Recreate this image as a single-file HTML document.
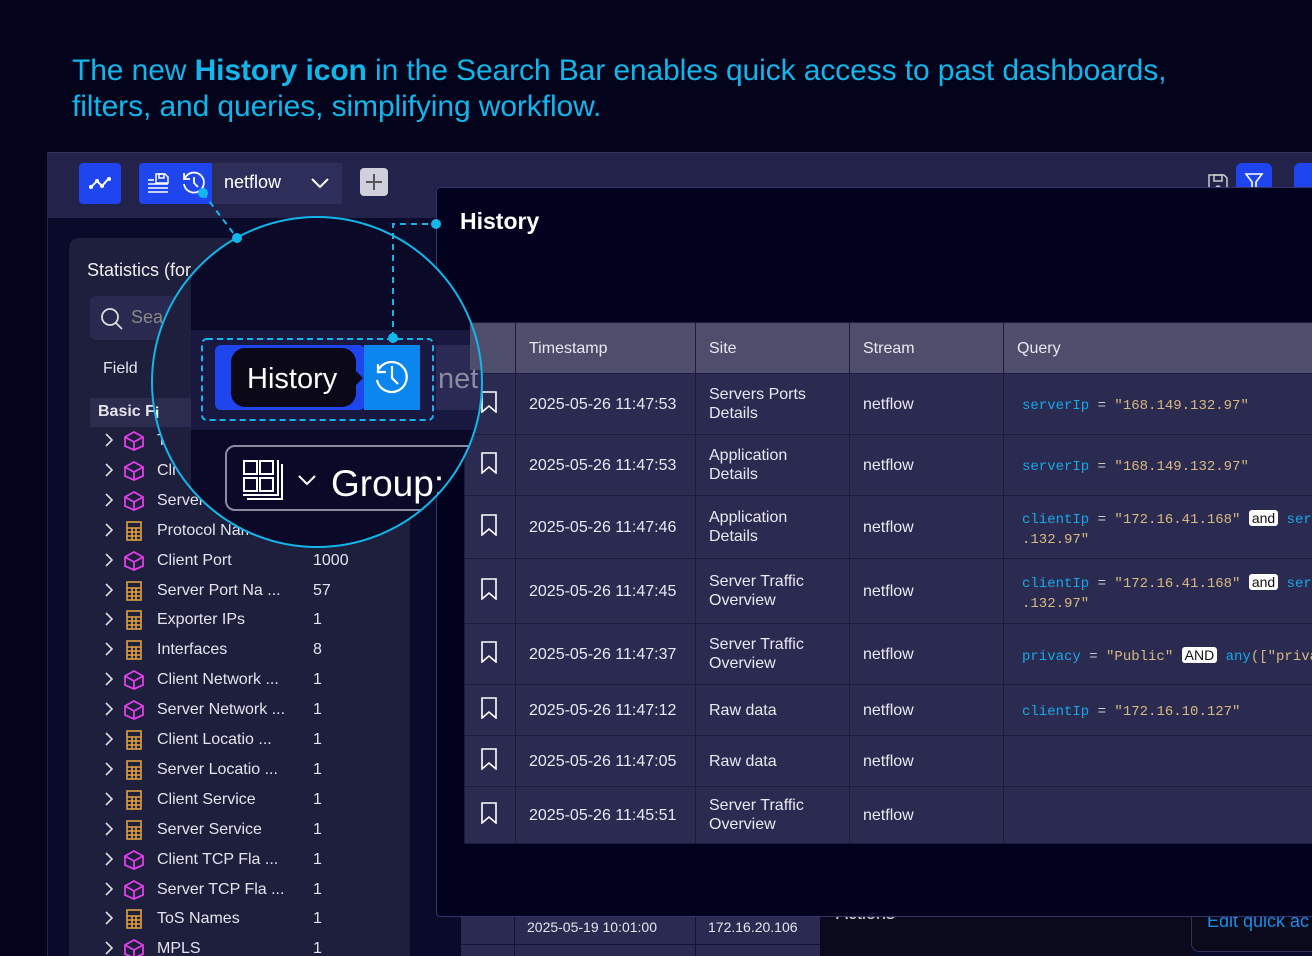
<!DOCTYPE html>
<html><head><meta charset="utf-8"><style>
*{margin:0;padding:0;box-sizing:border-box}
html,body{width:1312px;height:956px;overflow:hidden}
body{background:#03031c;font-family:"Liberation Sans",sans-serif;color:#e4e4ee;position:relative}
.abs{position:absolute}
h1{position:absolute;left:72px;top:53px;font-weight:400;font-size:30px;line-height:36px;color:#12b6ea;letter-spacing:-0.1px;white-space:nowrap}
h1 b{font-weight:700}
.frame{left:47px;top:152px;width:1265px;height:804px;background:#0a0a2a;border-top:1px solid #34345c;border-left:1px solid #24244a}
.topbar{left:48px;top:153px;width:1264px;height:65px;background:#22224a}
.side{left:69px;top:238px;width:341px;height:718px;background:#1e1e3d;border-radius:10px 10px 0 0}
.row{position:absolute;left:0;height:30px;font-size:16px;line-height:30px;width:341px}
.row .ch{position:absolute;left:35px;top:4px}
.row .ic{position:absolute;left:54px;top:5px}
.row .t{position:absolute;left:88px}
.row .v{position:absolute;left:244px}
.modal{left:436px;top:187px;width:880px;height:730px;background:#02021e;border:1px solid #34346a;border-radius:4px}
table{position:absolute;left:464px;top:322px;border-collapse:collapse;font-size:16px;color:#e8e8f0;table-layout:fixed;width:960px}
td,th{border:1px solid #1c1c3a;text-align:left;font-weight:400;padding:0 13px;vertical-align:middle;line-height:19px;overflow:hidden}
th{background:#4e4e6c;height:52px}
td{background:#2b2b52}
.nw{white-space:nowrap}
.q{font-family:"Liberation Mono",monospace;font-size:14px;color:#d8b980;white-space:nowrap;line-height:20px;padding-left:5px;padding-top:3px}
.k{color:#18a8e8}.o{color:#ccc}
.kw{background:#fff;color:#111;font-family:"Liberation Sans",sans-serif;border-radius:3px;padding:0 3px;font-size:14px}
</style></head><body>
<h1>The new <b>History icon</b> in the Search Bar enables quick access to past dashboards,<br>filters, and queries, simplifying workflow.</h1>

<div class="abs frame"></div>
<div class="abs topbar"></div>
<div class="abs" style="left:79px;top:163px;width:42px;height:41px;background:#1f45ef;border-radius:4px"></div>
<svg class="abs" style="left:89px;top:175px" width="22" height="16"><polyline points="2,12 8,6 13,11 20,3" fill="none" stroke="#fff" stroke-width="2"/><circle cx="8" cy="6" r="2" fill="#fff"/><circle cx="13" cy="11" r="2" fill="#fff"/><circle cx="2" cy="12" r="2" fill="#fff"/><circle cx="20" cy="4" r="2" fill="#fff"/></svg>
<div class="abs" style="left:139px;top:163px;width:73px;height:41px;background:#1f45ef;border-radius:4px 0 0 4px"></div>
<div class="abs" style="left:212px;top:163px;width:130px;height:41px;background:#2e2e5a"></div>
<svg class="abs" style="left:146px;top:171px" width="24" height="24" fill="none" stroke="#fff" stroke-width="1.5"><path d="M2 9h6M2 13h20M2 17h20M2 21h20M10 3h9l3 3v6H10z"/><rect x="13" y="3" width="5" height="4"/></svg>
<svg class="abs" style="left:181px;top:170px" width="26" height="26" fill="none" stroke="#fff" stroke-width="1.8"><path d="M4 8a10 10 0 1 1-1 6"/><path d="M3 3v6h6" /><path d="M13 7v6l4 4"/></svg>
<div class="abs" style="left:224px;top:172px;font-size:18px;color:#fff">netflow</div>
<svg class="abs" style="left:310px;top:176px" width="20" height="14"><polyline points="2,3 10,11 18,3" fill="none" stroke="#fff" stroke-width="2"/></svg>
<div class="abs" style="left:360px;top:168px;width:28px;height:28px;background:#d0d0dc;border-radius:4px"></div>
<svg class="abs" style="left:364px;top:172px" width="20" height="20"><path d="M10 2v16M2 10h16" stroke="#555" stroke-width="2"/></svg>
<svg class="abs" style="left:1206px;top:172px" width="24" height="24" fill="none" stroke="#ccc" stroke-width="1.5"><path d="M3 3h15l3 3v15H3z"/><rect x="8" y="3" width="8" height="6"/><circle cx="12" cy="16" r="2"/></svg>
<div class="abs" style="left:1236px;top:163px;width:36px;height:30px;background:#1f45ef;border-radius:6px 6px 0 0"></div>
<svg class="abs" style="left:1244px;top:172px" width="20" height="18"><path d="M2 2h16l-6 8v8h-4v-8z" fill="none" stroke="#fff" stroke-width="1.6"/></svg>
<div class="abs" style="left:1294px;top:163px;width:20px;height:30px;background:#1f45ef;border-radius:6px 0 0 0"></div>

<div class="abs side">
<div class="abs" style="left:18px;top:22px;font-size:18px;color:#eee">Statistics (for</div>
<div class="abs" style="left:21px;top:58px;width:320px;height:44px;background:#2a2a50;border-radius:6px"></div>
<svg class="abs" style="left:30px;top:68px" width="26" height="26" fill="none" stroke="#ddd" stroke-width="1.8"><circle cx="11" cy="11" r="8"/><path d="M17 17l6 6"/></svg>
<div class="abs" style="left:62px;top:69px;font-size:18px;color:#888">Sea</div>
<div class="abs" style="left:34px;top:122px;font-size:16px">Field</div>
<div class="abs" style="left:21px;top:160px;width:320px;height:29px;background:#2c2c4e"></div>
<div class="abs" style="left:29px;top:165px;font-size:16px;font-weight:700">Basic Fi</div>
<div id="rows"></div>
</div>

<div class="abs" style="left:461px;top:916px;width:359px;height:40px;background:#2b2b52"></div>
<div class="abs" style="left:461px;top:944px;width:359px;height:1px;background:#14143a"></div>
<div class="abs" style="left:514px;top:916px;width:1px;height:40px;background:#14143a"></div>
<div class="abs" style="left:695px;top:916px;width:1px;height:40px;background:#14143a"></div>
<div class="abs" style="left:527px;top:919px;font-size:14px">2025-05-19 10:01:00</div>
<div class="abs" style="left:708px;top:919px;font-size:14px">172.16.20.106</div>
<div class="abs" style="left:820px;top:916px;width:372px;height:40px;background:#0b0a1c"></div>
<div class="abs" style="left:836px;top:903px;font-size:18px;color:#ddd">Actions</div>
<div class="abs" style="left:1191px;top:906px;width:130px;height:46px;border:1px solid #33335a;border-radius:8px;background:#0b0a1c"></div>
<div class="abs" style="left:1207px;top:911px;font-size:18px;color:#1c8ce6">Edit quick ac</div>

<div class="abs modal"></div>
<div class="abs" style="left:460px;top:208px;font-size:23px;font-weight:700;color:#fff">History</div>

<table>
<colgroup><col style="width:51px"><col style="width:180px"><col style="width:154px"><col style="width:154px"><col style="width:421px"></colgroup>
<tr><th></th><th>Timestamp</th><th>Site</th><th>Stream</th><th>Query</th></tr>
</table>
<div id="tb"></div>

<svg class="abs" style="left:0;top:0" width="1312" height="956">
<defs><clipPath id="cc"><circle cx="317" cy="382" r="165"/></clipPath></defs>
<circle cx="317" cy="382" r="165" fill="#0a0a28"/>
<g clip-path="url(#cc)">
<rect x="100" y="200" width="91" height="400" fill="#1e1e3d"/>
<rect x="191" y="330" width="320" height="100" fill="#181840"/>
<rect x="436" y="345" width="60" height="65" fill="#2a2a55"/>
<rect x="470" y="320" width="60" height="50" fill="#4e4e6c"/>
<rect x="215" y="345" width="150" height="65" rx="6" fill="#1f45ef"/>
<rect x="364" y="345" width="56" height="65" fill="#0a86ee"/>
<rect x="231" y="348" width="125" height="59" rx="14" fill="#0b0818"/>
<path d="M355 370l8 8-8 8z" fill="#0b0818"/>
<rect x="202" y="339" width="231" height="81" rx="5" fill="none" stroke="#12b6ea" stroke-width="2" stroke-dasharray="6,4"/>
<text x="247" y="388" font-size="29" fill="#fff" font-family="Liberation Sans">History</text>
<g fill="none" stroke="#fff" stroke-width="2.2"><path d="M379 369a15 15 0 1 1-2 11"/><path d="M378 364v8h8"/><path d="M392 366v12l6 6"/></g>
<text x="438" y="388" font-size="29" fill="#8a8aa0" font-family="Liberation Sans">net</text>
<rect x="226" y="446" width="280" height="64" rx="9" fill="#0a0a28" stroke="#8a8aa0" stroke-width="2"/>
<g fill="none" stroke="#fff" stroke-width="2"><rect x="244" y="461" width="13" height="13"/><rect x="260" y="461" width="13" height="13"/><rect x="244" y="478" width="13" height="13"/><rect x="260" y="478" width="13" height="13"/><path d="M278 460v35h-35M282 464v35h-35"/><path d="M299 476l8 8 8-8"/></g>
<text x="331" y="496" font-size="37" fill="#fff" font-family="Liberation Sans">Group:</text>
<text x="87" y="277" font-size="18" fill="#eee" font-family="Liberation Sans">Statistics (for</text>
<text x="103" y="375" font-size="16" fill="#eee" font-family="Liberation Sans">Field</text>
<rect x="90" y="398" width="101" height="29" fill="#2c2c4e"/>
<text x="98" y="418" font-size="16" font-weight="700" fill="#eee" font-family="Liberation Sans">Basic Fi</text>
</g>
<circle cx="317" cy="382" r="165" fill="none" stroke="#12b6ea" stroke-width="2"/>
<g stroke="#12b6ea" stroke-width="2" stroke-dasharray="6,5" fill="none"><path d="M203 193L237 238"/><path d="M393 338V224H436"/></g>
<g fill="#12b6ea"><circle cx="203" cy="193" r="5"/><circle cx="237" cy="238" r="5"/><circle cx="393" cy="338" r="5"/><circle cx="436" cy="224" r="5"/></g>
</svg>

<script>
var items=[["T",1,""],["Cli",1,""],["Server",1,""],["Protocol Nam",0,""],["Client Port",1,"1000"],["Server Port Na ...",0,"57"],["Exporter IPs",0,"1"],["Interfaces",0,"8"],["Client Network ...",1,"1"],["Server Network ...",1,"1"],["Client Locatio ...",0,"1"],["Server Locatio ...",0,"1"],["Client Service",0,"1"],["Server Service",0,"1"],["Client TCP Fla ...",1,"1"],["Server TCP Fla ...",1,"1"],["ToS Names",0,"1"],["MPLS",1,"1"]];
var cube='<svg width="22" height="20" fill="none" stroke="#e040e8" stroke-width="1.8"><path d="M11 1l9 5v9l-9 4-9-4V6z"/><path d="M2 6l9 5 9-5M11 11v8"/></svg>';
var calc='<svg width="22" height="20" fill="none" stroke="#e0a040" stroke-width="1.6"><rect x="4" y="1" width="14" height="18"/><path d="M4 7h14M4 11h14M4 15h14M9 7v12M13 7v12"/></svg>';
var chev='<svg width="10" height="20"><path d="M2 4l6 6-6 6" fill="none" stroke="#ddd" stroke-width="1.6"/></svg>';
var h='';items.forEach(function(it,i){h+='<div class="row" style="top:'+(188+i*29.9)+'px"><span class="ch">'+chev+'</span><span class="ic">'+(it[1]?cube:calc)+'</span><span class="t">'+it[0]+'</span><span class="v">'+it[2]+'</span></div>'});
document.getElementById('rows').innerHTML=h;
var rows=[["11:47:53","Servers Ports<br>Details",'<span class="k">serverIp</span> <span class="o">=</span> "168.149.132.97"',61],
["11:47:53","Application<br>Details",'<span class="k">serverIp</span> <span class="o">=</span> "168.149.132.97"',61],
["11:47:46","Application<br>Details",'<span class="k">clientIp</span> <span class="o">=</span> "172.16.41.168" <span class="kw">and</span> <span class="k">ser</span><br>.132.97"',63],
["11:47:45","Server Traffic<br>Overview",'<span class="k">clientIp</span> <span class="o">=</span> "172.16.41.168" <span class="kw">and</span> <span class="k">ser</span><br>.132.97"',65],
["11:47:37","Server Traffic<br>Overview",'<span class="k">privacy</span> <span class="o">=</span> "Public" <span class="kw">AND</span> <span class="k">any</span>(["priva',61],
["11:47:12","Raw data",'<span class="k">clientIp</span> <span class="o">=</span> "172.16.10.127"',51],
["11:47:05","Raw data","",51],
["11:45:51","Server Traffic<br>Overview","",57]];
var bm='<svg width="18" height="22" fill="none" stroke="#fff" stroke-width="1.6"><path d="M2 1h14v20l-7-6-7 6z"/></svg>';
var t='<table style="top:373px"><colgroup><col style="width:51px"><col style="width:180px"><col style="width:154px"><col style="width:154px"><col style="width:421px"></colgroup>';rows.forEach(function(r){t+='<tr style="height:'+r[3]+'px"><td style="padding:0 15px">'+bm+'</td><td class="nw">2025-05-26 '+r[0]+'</td><td>'+r[1]+'</td><td>netflow</td><td><div class="q">'+r[2]+'</div></td></tr>'});
document.getElementById('tb').innerHTML=t+'</table>';
</script>
</body></html>
